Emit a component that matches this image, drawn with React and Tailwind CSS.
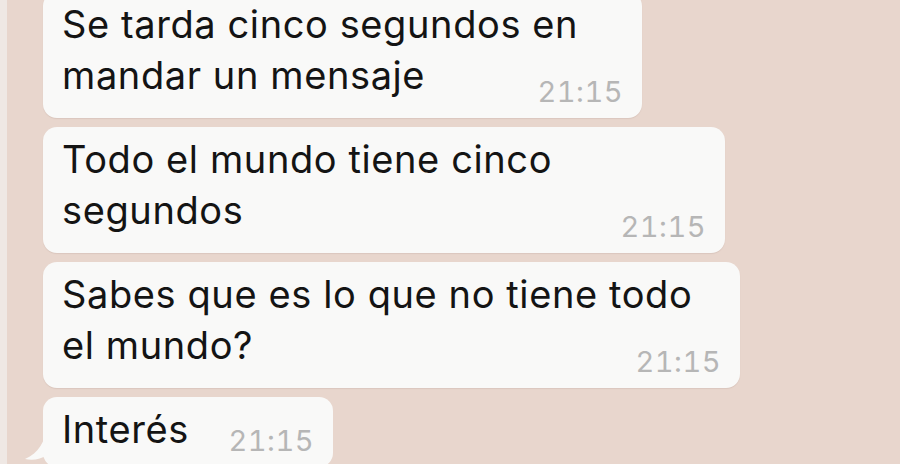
const messages = [
  { lines: ['Se tarda cinco segundos en', 'mandar un mensaje'], width: 'w-[599px]', first: true },
  { lines: ['Todo el mundo tiene cinco', 'segundos'], width: 'w-[682px]' },
  { lines: ['Sabes que es lo que no tiene todo', 'el mundo?'], width: 'w-[697px]' },
];

function Time({ className = '' }) {
  return (
    <span
      className={`text-[29px] leading-[29px] tracking-[0.5px] tabular-nums whitespace-nowrap text-[#b6b6b6] ${className}`}
    >
      21:15
    </span>
  );
}

function Bubble({ lines, width, first }) {
  const head = lines.slice(0, -1);
  const last = lines[lines.length - 1];
  return (
    <div
      className={`${width} ${first ? '-mt-[8px]' : ''} rounded-[14px] bg-[#f9f9f8] px-[19px] pt-[7px] pb-[12px] shadow-[0_1px_1px_rgba(120,90,80,0.12)]`}
    >
      {head.map((l) => (
        <p key={l} className="text-[38px] leading-[51px] tracking-[0.6px] whitespace-nowrap text-[#141414]">
          {l}
        </p>
      ))}
      <div className="flex items-start justify-between">
        <p className="text-[38px] leading-[51px] tracking-[0.6px] whitespace-nowrap text-[#141414]">{last}</p>
        <Time className="mt-[27px]" />
      </div>
    </div>
  );
}

export default function App() {
  return (
    <div
      className="flex h-[464px] w-[900px] overflow-hidden bg-[#e8d6cd]"
      style={{ fontFamily: 'Inter, "Liberation Sans", sans-serif' }}
    >
      <div className="w-[7px] shrink-0 bg-[#efe8e4]" />
      <div className="flex flex-col gap-[9px] pl-[36px]">
        {messages.map((m) => (
          <Bubble key={m.lines[0]} {...m} />
        ))}
        <div className="relative flex w-[290px] items-start justify-between rounded-[14px] bg-[#f9f9f8] px-[19px] pt-[7px] pb-[12px]">
          <p className="text-[38px] leading-[51px] tracking-[0.6px] text-[#141414]">Interés</p>
          <Time className="mt-[22px]" />
          <svg
            className="absolute left-[-18px] top-[30px]"
            width="22"
            height="34"
            viewBox="0 0 22 34"
          >
            <path d="M22 0 C20 14 14 26 0 32 C8 34 16 32 22 28 Z" fill="#f9f9f8" />
          </svg>
        </div>
      </div>
    </div>
  );
}
